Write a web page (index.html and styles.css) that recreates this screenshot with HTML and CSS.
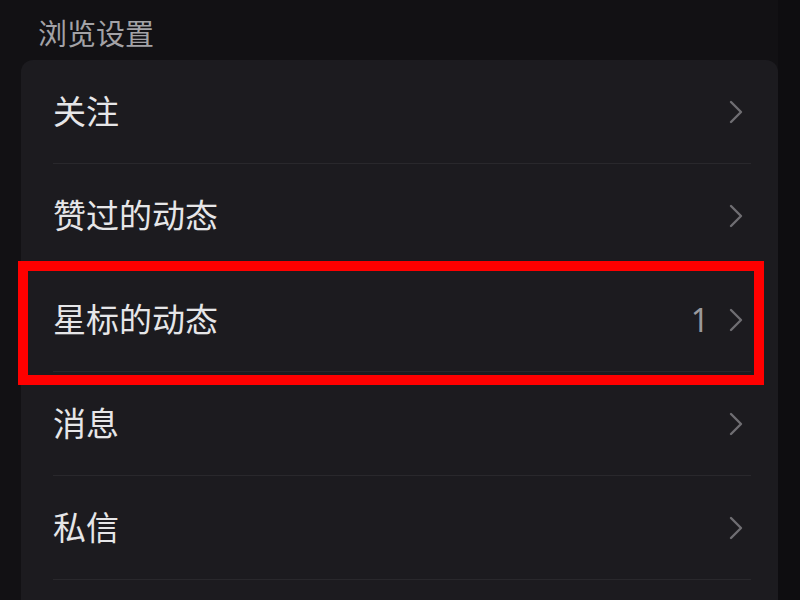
FILE: index.html
```html
<!DOCTYPE html>
<html lang="zh-CN">
<head>
<meta charset="utf-8">
<link rel="stylesheet" href="styles.css">
</head>
<body>
<div class="page">
  <div class="section-title">浏览设置</div>
  <div class="card">
    <div class="row"><span class="label">关注</span><span class="right"><svg class="chev" viewBox="0 0 14 24"><path d="M2 2 L12 12 L2 22"/></svg></span></div>
    <div class="row"><span class="label">赞过的动态</span><span class="right"><svg class="chev" viewBox="0 0 14 24"><path d="M2 2 L12 12 L2 22"/></svg></span></div>
    <div class="row"><span class="label">星标的动态</span><span class="right"><span class="count">1</span><svg class="chev" viewBox="0 0 14 24"><path d="M2 2 L12 12 L2 22"/></svg></span></div>
    <div class="row"><span class="label">消息</span><span class="right"><svg class="chev" viewBox="0 0 14 24"><path d="M2 2 L12 12 L2 22"/></svg></span></div>
    <div class="row"><span class="label">私信</span><span class="right"><svg class="chev" viewBox="0 0 14 24"><path d="M2 2 L12 12 L2 22"/></svg></span></div>
    <div class="row"><span class="label"></span></div>
  </div>
  <div class="highlight"></div>
</div>
</body>
</html>
```
FILE: styles.css
```css
html, body {
  margin: 0;
  padding: 0;
  background: #111013;
  width: 800px;
  height: 600px;
  overflow: hidden;
  font-family: "Noto Sans CJK SC", "Noto Sans", sans-serif;
}
.page {
  position: relative;
  width: 800px;
  height: 600px;
  background: linear-gradient(to right, #121114 0, #121114 778px, #0e0d10 778px);
}
.section-title {
  padding: 13px 0 0 38px;
  height: 60px;
  box-sizing: border-box;
  font-size: 29px;
  line-height: 38px;
  color: #a3a2a6;
}
.card {
  margin-left: 21px;
  width: 757px;
  background: #1c1b1f;
  border-radius: 12px 12px 0 0;
  height: 540px;
  overflow: hidden;
}
.row {
  height: 103px;
  margin-left: 32px;
  margin-right: 27px;
  border-bottom: 1px solid #29282c;
  display: flex;
  align-items: center;
  justify-content: space-between;
}
.label {
  font-size: 33px;
  color: #e6e6e8;
  line-height: 40px;
  margin-top: -4px;
}
.right {
  display: flex;
  align-items: center;
  gap: 20px;
}
.count {
  font-size: 32px;
  color: #9a999d;
  line-height: 40px;
  font-family: "Noto Sans", sans-serif;
}
.chev {
  width: 14px;
  height: 24px;
  display: block;
  margin-right: 8px;
}
.chev path {
  fill: none;
  stroke: #6f6e72;
  stroke-width: 2.4;
  stroke-linecap: round;
  stroke-linejoin: round;
}
.highlight {
  position: absolute;
  left: 18px;
  top: 261px;
  width: 746px;
  height: 124px;
  box-sizing: border-box;
  border: 10px solid #ff0000;
}
```
